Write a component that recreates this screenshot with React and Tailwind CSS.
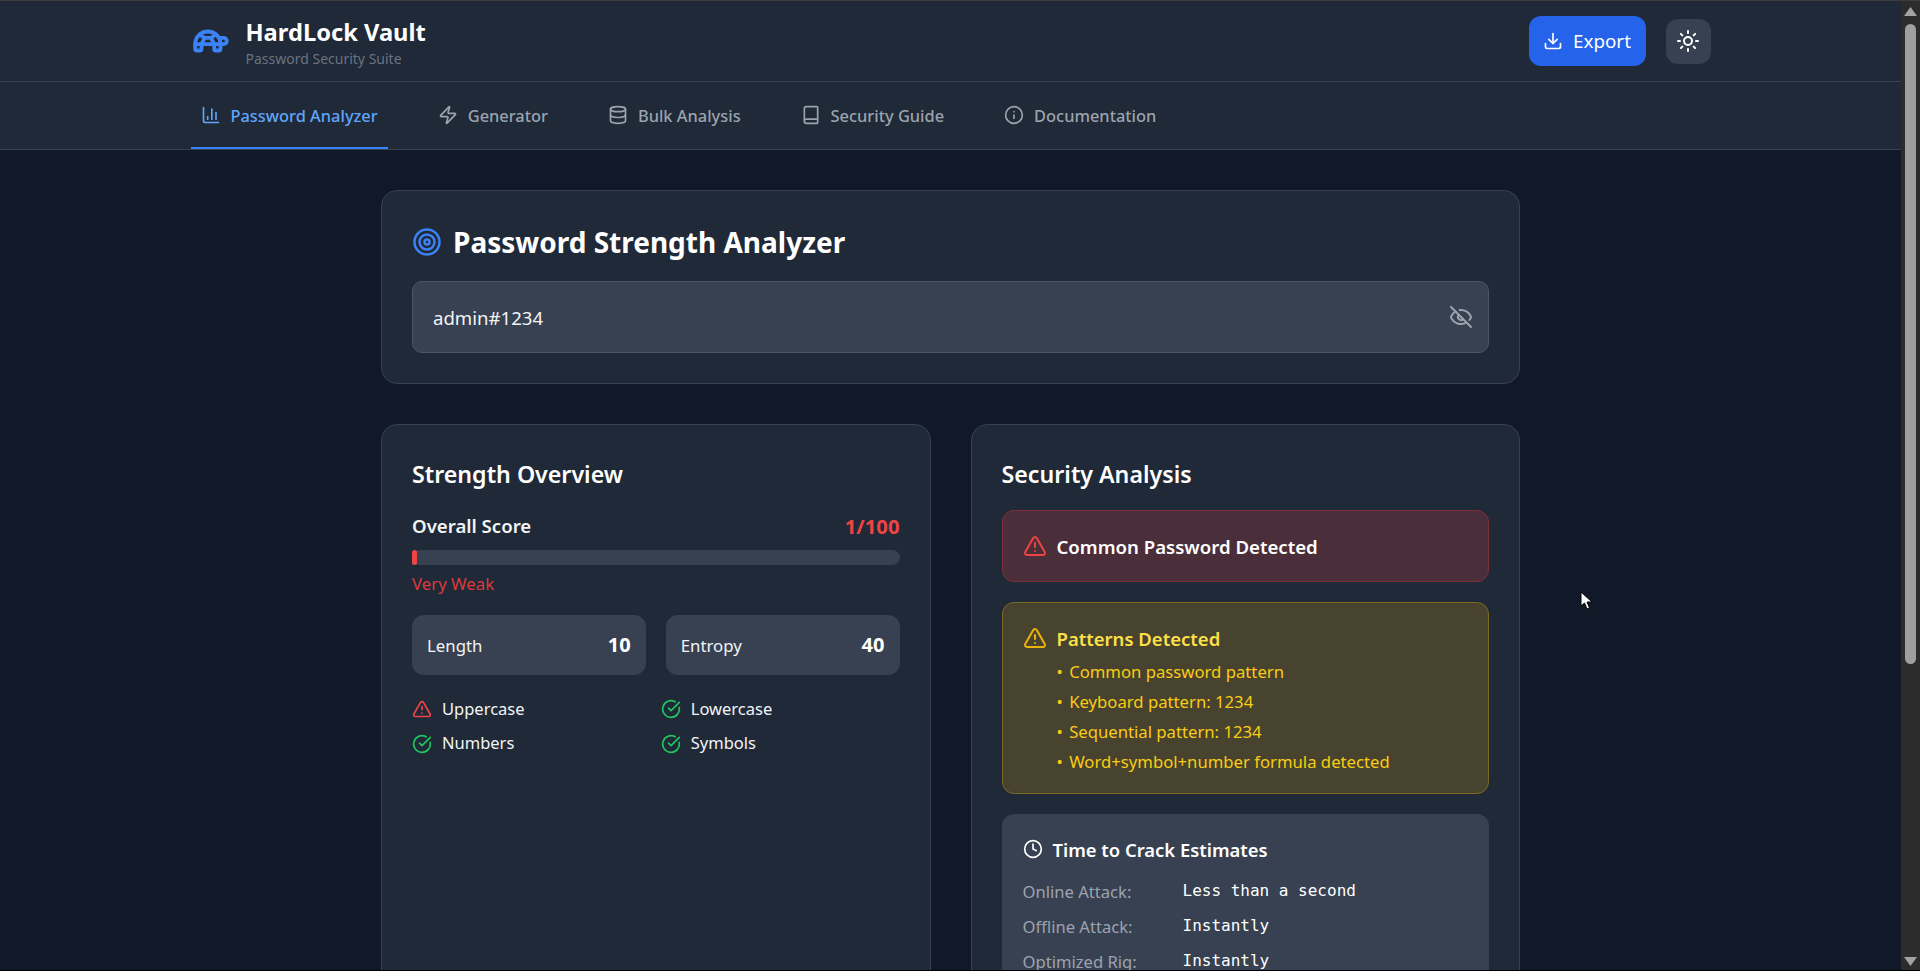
import React from "react";
import { Turtle, ChartColumn, Zap, Database, Book, Info, Download, Sun, Target, EyeOff, TriangleAlert, CircleCheckBig, Clock } from "lucide-react";

const tabs = [
  { label: "Password Analyzer", Icon: ChartColumn, active: true },
  { label: "Generator", Icon: Zap },
  { label: "Bulk Analysis", Icon: Database },
  { label: "Security Guide", Icon: Book },
  { label: "Documentation", Icon: Info },
];

const patterns = ["Common password pattern", "Keyboard pattern: 1234", "Sequential pattern: 1234", "Word+symbol+number formula detected"];

function Check({ ok, label }) {
  return (
    <div className="flex items-center gap-[10px] h-[26px]">
      {ok ? <CircleCheckBig className="w-[20px] h-[20px] text-[#22c55e]" /> : <TriangleAlert className="w-[20px] h-[20px] text-[#ef4444]" />}
      <span className="text-[16.5px] text-[#f3f4f6]">{label}</span>
    </div>
  );
}

function Stat({ label, value }) {
  return (
    <div className="flex items-center justify-between h-[60px] px-[15px] rounded-[12px] bg-[#374151]">
      <span className="text-[16.8px] text-[#f3f4f6] pt-[2px]">{label}</span>
      <span className="text-[20px] font-bold text-white">{value}</span>
    </div>
  );
}

function Row({ label, value }) {
  return (
    <div className="flex items-center h-[26px]">
      <span className="w-[160px] text-[16.6px] text-[#9ca3af] pt-[2px]">{label}</span>
      <span className="text-[16px] text-white font-['DejaVu_Sans_Mono',monospace]">{value}</span>
    </div>
  );
}

export default function App() {
  return (
    <div className="h-[971px] flex flex-col overflow-hidden bg-black font-['Noto_Sans',sans-serif]">
      <div className="h-px bg-[#3d3d42]" />
      <div className="flex-1 min-h-0 flex">
        <div className="w-[1901px] bg-[#111827] overflow-hidden">
          <header className="bg-[#1f2937] border-b border-[#374151]">
            <div className="w-[1520px] mx-auto h-[80px] flex items-center justify-between">
              <div className="flex items-center gap-[16px] pl-px">
                <Turtle className="w-[38px] h-[38px] text-[#3b82f6]" strokeWidth={2.4} />
                <div className="pt-[2px]">
                  <div className="text-[23.7px] leading-[32px] font-bold text-white">HardLock Vault</div>
                  <div className="text-[14px] leading-[20px] mt-[1px] text-[#6b7280]">Password Security Suite</div>
                </div>
              </div>
              <div className="flex items-center gap-[20px]">
                <button className="w-[117px] h-[50px] rounded-[12px] bg-[#2563eb] flex items-center justify-center gap-[10px] text-white text-[18.8px]">
                  <Download className="w-[20px] h-[20px]" />
                  Export
                </button>
                <button className="w-[45px] h-[45px] rounded-[12px] bg-[#374151] flex items-center justify-center text-white">
                  <Sun className="w-[24px] h-[24px]" />
                </button>
              </div>
            </div>
          </header>
          <nav className="bg-[#1f2937] border-b border-[#374151]">
            <div className="w-[1520px] mx-auto h-[67px] flex gap-[40px]">
              {tabs.map(({ label, Icon, active }) => (
                <div key={label} className={`flex items-center gap-[10px] px-[10px] border-b-2 ${active ? "border-[#3b82f6] text-[#60a5fa]" : "border-transparent text-[#9ca3af]"}`}>
                  <Icon className="w-[20px] h-[20px]" />
                  <span className="text-[16.4px] font-medium pt-[4px]">{label}</span>
                </div>
              ))}
            </div>
          </nav>
          <main className="w-[1139px] mx-auto pt-[40px] flex flex-col gap-[40px]">
            <section className="bg-[#1f2937] border border-[#374151] rounded-[16px] px-[30px] pt-[30px] pb-[30px]">
              <div className="flex items-center gap-[11px] h-[42px] mb-[18px]">
                <Target className="w-[30px] h-[30px] text-[#3b82f6]" />
                <h1 className="text-[28px] font-bold text-white">Password Strength Analyzer</h1>
              </div>
              <div className="h-[72px] rounded-[10px] bg-[#374151] border border-[#4b5563] flex items-center justify-between pl-[20px] pr-[15px]">
                <span className="text-[18.6px] text-[#f3f4f6] pt-[1px]">admin#1234</span>
                <EyeOff className="w-[24px] h-[24px] text-[#9ca3af]" />
              </div>
            </section>
            <div className="grid grid-cols-2 gap-[40px]">
              <section className="bg-[#1f2937] border border-[#374151] rounded-[16px] px-[30px] pt-[29px]">
                <h2 className="text-[23.2px] leading-[40px] font-semibold text-white">Strength Overview</h2>
                <div className="flex items-center justify-between mt-[20px] h-[24px]">
                  <span className="text-[18.6px] font-semibold text-[#f3f4f6]">Overall Score</span>
                  <span className="text-[20.3px] font-bold text-[#ef4444]">1/100</span>
                </div>
                <div className="mt-[12px] h-[15px] rounded-full bg-[#374151]">
                  <div className="w-[5px] h-full rounded-[3px] bg-[#ef4444]" />
                </div>
                <div className="mt-[7px] text-[16.8px] leading-[24px] text-[#dc3b3b]">Very Weak</div>
                <div className="grid grid-cols-2 gap-[20px] mt-[19px]">
                  <Stat label="Length" value="10" />
                  <Stat label="Entropy" value="40" />
                </div>
                <div className="grid grid-cols-2 gap-x-[10px] gap-y-[8.5px] mt-[21px]">
                  <Check label="Uppercase" />
                  <Check ok label="Lowercase" />
                  <Check ok label="Numbers" />
                  <Check ok label="Symbols" />
                </div>
              </section>
              <section className="bg-[#1f2937] border border-[#374151] rounded-[16px] px-[30px] pt-[29px] pb-[30px]">
                <h2 className="text-[23.2px] leading-[40px] font-semibold text-white">Security Analysis</h2>
                <div className="mt-[16px] h-[72px] rounded-[12px] bg-[#4a2e3a] border border-[#7f2f3a] flex items-center gap-[10px] px-[20px]">
                  <TriangleAlert className="w-[24px] h-[24px] text-[#ef4444]" />
                  <span className="text-[18.6px] font-semibold text-white pt-[1px]">Common Password Detected</span>
                </div>
                <div className="mt-[20px] rounded-[12px] bg-[#47432e] border border-[#7a6a24] px-[20px] pt-[21px] pb-[17px]">
                  <div className="flex items-center gap-[10px] h-[28px]">
                    <TriangleAlert className="w-[24px] h-[24px] text-[#eab308]" />
                    <span className="text-[18.5px] font-semibold text-[#fde047] pt-[1px]">Patterns Detected</span>
                  </div>
                  <ul className="pl-[34px] mt-[4px] text-[16.7px] text-[#facc15]">
                    {patterns.map((p) => (
                      <li key={p} className="h-[30px] leading-[31px]">
                        <span className="mr-[2px]">•</span> {p}
                      </li>
                    ))}
                  </ul>
                </div>
                <div className="mt-[20px] rounded-[12px] bg-[#374151] pl-[21px] pr-[20px] pt-[21px] pb-[20px]">
                  <div className="flex items-center gap-[10px] h-[28px] mb-[15px]">
                    <Clock className="w-[20px] h-[20px] text-white" />
                    <span className="text-[18.4px] font-semibold text-white pt-[1px]">Time to Crack Estimates</span>
                  </div>
                  <div className="flex flex-col gap-[9px]">
                    <Row label="Online Attack:" value="Less than a second" />
                    <Row label="Offline Attack:" value="Instantly" />
                    <Row label="Optimized Rig:" value="Instantly" />
                  </div>
                </div>
              </section>
            </div>
          </main>
        </div>
        <aside className="w-[19px] bg-[#2c2c2c] flex flex-col items-center pt-[6px] pb-[4px]">
          <svg width="13" height="9" viewBox="0 0 13 9"><polygon points="6.5,0 13,9 0,9" fill="#a3a3a3" /></svg>
          <div className="w-[11px] h-[640px] mt-[8px] rounded-full bg-[#9f9f9f]" />
          <div className="flex-1" />
          <svg width="13" height="9" viewBox="0 0 13 9"><polygon points="0,0 13,0 6.5,9" fill="#a3a3a3" /></svg>
        </aside>
      </div>
      <div className="h-px bg-black" />
      <svg className="absolute left-[1580px] top-[591px]" width="14" height="20" viewBox="0 0 14 20">
        <path d="M1 1 L1 15 L4.5 12 L7 18 L9.5 17 L7 11 L12 11 Z" fill="#fff" stroke="#000" strokeWidth="1" />
      </svg>
    </div>
  );
}
